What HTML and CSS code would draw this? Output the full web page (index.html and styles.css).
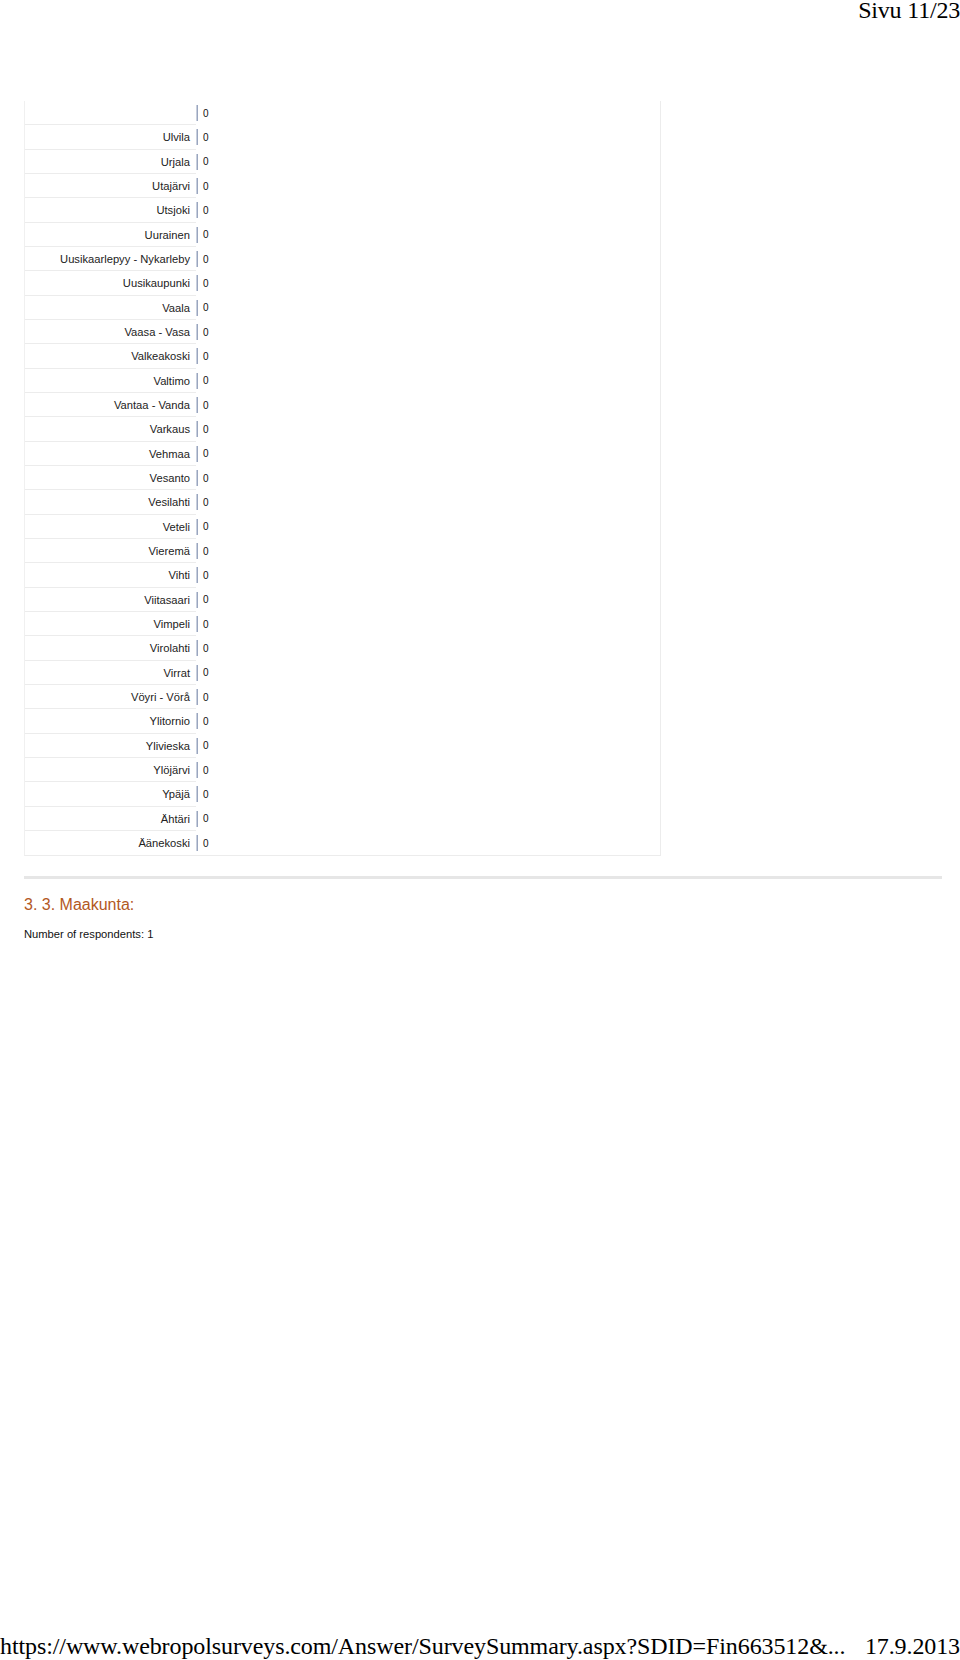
FILE: index.html
```html
<!DOCTYPE html>
<html lang="fi">
<head>
<meta charset="utf-8">
<title>Sivu 11/23</title>
<link rel="stylesheet" href="styles.css">
</head>
<body>
<div class="page">
  <header class="page-head">Sivu 11/23</header>
  <main class="content">
    <div class="results">
      <div class="row"><div class="label"></div><div class="val"><span class="bar"></span><span class="num">0</span></div></div>
      <div class="row"><div class="label">Ulvila</div><div class="val"><span class="bar"></span><span class="num">0</span></div></div>
      <div class="row"><div class="label">Urjala</div><div class="val"><span class="bar"></span><span class="num">0</span></div></div>
      <div class="row"><div class="label">Utajärvi</div><div class="val"><span class="bar"></span><span class="num">0</span></div></div>
      <div class="row"><div class="label">Utsjoki</div><div class="val"><span class="bar"></span><span class="num">0</span></div></div>
      <div class="row"><div class="label">Uurainen</div><div class="val"><span class="bar"></span><span class="num">0</span></div></div>
      <div class="row"><div class="label">Uusikaarlepyy - Nykarleby</div><div class="val"><span class="bar"></span><span class="num">0</span></div></div>
      <div class="row"><div class="label">Uusikaupunki</div><div class="val"><span class="bar"></span><span class="num">0</span></div></div>
      <div class="row"><div class="label">Vaala</div><div class="val"><span class="bar"></span><span class="num">0</span></div></div>
      <div class="row"><div class="label">Vaasa - Vasa</div><div class="val"><span class="bar"></span><span class="num">0</span></div></div>
      <div class="row"><div class="label">Valkeakoski</div><div class="val"><span class="bar"></span><span class="num">0</span></div></div>
      <div class="row"><div class="label">Valtimo</div><div class="val"><span class="bar"></span><span class="num">0</span></div></div>
      <div class="row"><div class="label">Vantaa - Vanda</div><div class="val"><span class="bar"></span><span class="num">0</span></div></div>
      <div class="row"><div class="label">Varkaus</div><div class="val"><span class="bar"></span><span class="num">0</span></div></div>
      <div class="row"><div class="label">Vehmaa</div><div class="val"><span class="bar"></span><span class="num">0</span></div></div>
      <div class="row"><div class="label">Vesanto</div><div class="val"><span class="bar"></span><span class="num">0</span></div></div>
      <div class="row"><div class="label">Vesilahti</div><div class="val"><span class="bar"></span><span class="num">0</span></div></div>
      <div class="row"><div class="label">Veteli</div><div class="val"><span class="bar"></span><span class="num">0</span></div></div>
      <div class="row"><div class="label">Vieremä</div><div class="val"><span class="bar"></span><span class="num">0</span></div></div>
      <div class="row"><div class="label">Vihti</div><div class="val"><span class="bar"></span><span class="num">0</span></div></div>
      <div class="row"><div class="label">Viitasaari</div><div class="val"><span class="bar"></span><span class="num">0</span></div></div>
      <div class="row"><div class="label">Vimpeli</div><div class="val"><span class="bar"></span><span class="num">0</span></div></div>
      <div class="row"><div class="label">Virolahti</div><div class="val"><span class="bar"></span><span class="num">0</span></div></div>
      <div class="row"><div class="label">Virrat</div><div class="val"><span class="bar"></span><span class="num">0</span></div></div>
      <div class="row"><div class="label">Vöyri - Vörå</div><div class="val"><span class="bar"></span><span class="num">0</span></div></div>
      <div class="row"><div class="label">Ylitornio</div><div class="val"><span class="bar"></span><span class="num">0</span></div></div>
      <div class="row"><div class="label">Ylivieska</div><div class="val"><span class="bar"></span><span class="num">0</span></div></div>
      <div class="row"><div class="label">Ylöjärvi</div><div class="val"><span class="bar"></span><span class="num">0</span></div></div>
      <div class="row"><div class="label">Ypäjä</div><div class="val"><span class="bar"></span><span class="num">0</span></div></div>
      <div class="row"><div class="label">Ähtäri</div><div class="val"><span class="bar"></span><span class="num">0</span></div></div>
      <div class="row"><div class="label">Äänekoski</div><div class="val"><span class="bar"></span><span class="num">0</span></div></div>
    </div>
    <hr class="divider">
    <h2 class="question">3. 3. Maakunta:</h2>
    <p class="respondents">Number of respondents: 1</p>
  </main>
  <footer class="page-foot">
    <span class="url">https://www.webropolsurveys.com/Answer/SurveySummary.aspx?SDID=Fin663512&amp;...</span>
    <span class="date">17.9.2013</span>
  </footer>
</div>
</body>
</html>
```

FILE: styles.css
```css
html, body {
  margin: 0;
  padding: 0;
  background: #fff;
}

.page {
  width: 960px;
  height: 1660px;
  display: flex;
  flex-direction: column;
  overflow: hidden;
}

.page-head {
  font-family: "Liberation Serif", "Times New Roman", serif;
  font-size: 24px;
  line-height: 18px;
  height: 18px;
  color: #000;
  text-align: right;
  letter-spacing: -0.2px;
  padding-top: 1px;
}

.content {
  padding: 82px 0 0 24px;
  font-family: "Liberation Sans", Arial, sans-serif;
}

.results {
  width: 635px;
  border-left: 1px solid #f0f0f0;
  border-right: 1px solid #ececec;
  border-bottom: 1px solid #ececec;
}

.row {
  display: flex;
  height: 24.33px;
}

.label {
  width: 171px;
  flex: none;
  box-sizing: border-box;
  border-bottom: 1px solid #ececec;
  text-align: right;
  padding-right: 6px;
  font-size: 11.2px;
  line-height: 24px;
  color: #222;
  white-space: nowrap;
}

.row:last-child .label {
  border-bottom: none;
}

.val {
  display: flex;
  align-items: center;
  gap: 5px;
}

.bar {
  width: 2px;
  height: 16px;
  background: #9aa6bf;
  border-left: 1px solid #c8cfdd;
  box-sizing: border-box;
}

.num {
  font-size: 10px;
  color: #111;
}

.divider {
  margin: 20px 0 0 0;
  width: 918px;
  height: 3px;
  border: none;
  background: #e6e6e6;
}

.question {
  margin: 16px 0 0 0;
  font-size: 16px;
  line-height: 20px;
  font-weight: normal;
  color: #b3581f;
}

.respondents {
  margin: 12px 0 0 0;
  font-size: 11.2px;
  line-height: 14px;
  color: #111;
}

.page-foot {
  margin-top: auto;
  height: 28px;
  display: flex;
  justify-content: space-between;
  align-items: flex-end;
  font-family: "Liberation Serif", "Times New Roman", serif;
  font-size: 24px;
  line-height: 24px;
  color: #000;
  letter-spacing: -0.1px;
  padding-bottom: 2px;
}
```
